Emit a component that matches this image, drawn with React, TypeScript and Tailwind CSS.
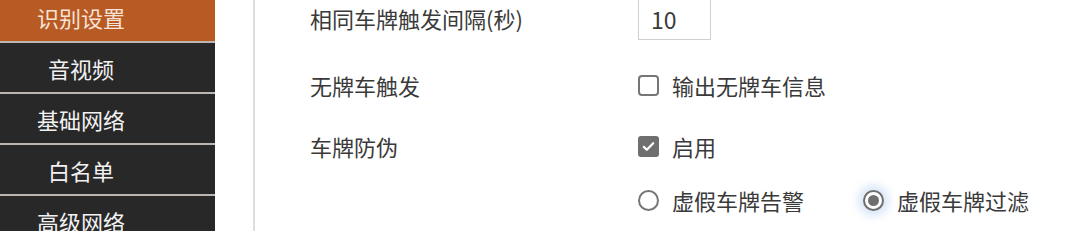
import type { ReactNode } from 'react';

const MENU = [
  { label: '识别设置', active: true },
  { label: '音视频', active: false },
  { label: '基础网络', active: false },
  { label: '白名单', active: false },
  { label: '高级网络', active: false },
];

function Checkbox({ checked }: { checked: boolean }) {
  if (checked) {
    return (
      <span className="flex h-[21px] w-[21px] items-center justify-center rounded-[3px] bg-[#6f6f6f]">
        <svg viewBox="0 0 16 16" className="h-[15px] w-[15px]" fill="none">
          <path d="M3 8.4l3.2 3.1L13 4.6" stroke="#fff" strokeWidth="2.4" strokeLinecap="round" strokeLinejoin="round" />
        </svg>
      </span>
    );
  }
  return <span className="block h-[21px] w-[21px] rounded-[4px] border-2 border-[#767676] bg-white" />;
}

function Radio({ checked }: { checked: boolean }) {
  if (checked) {
    return (
      <span className="flex h-[21px] w-[21px] items-center justify-center rounded-full border-2 border-[#6f6f6f] bg-white shadow-[0_0_8px_5px_rgba(170,200,240,0.45)]">
        <span className="block h-[11px] w-[11px] rounded-full bg-[#6f6f6f]" />
      </span>
    );
  }
  return <span className="block h-[21px] w-[21px] rounded-full border-2 border-[#767676] bg-white" />;
}

function Option({ control, children }: { control: ReactNode; children: ReactNode }) {
  return (
    <label className="flex items-center gap-[13px]">
      {control}
      <span>{children}</span>
    </label>
  );
}

export default function App() {
  return (
    <div
      className="flex h-[231px] w-[1080px] overflow-hidden bg-white text-[22px] leading-none"
      style={{ fontFamily: '"Noto Sans CJK SC", "Noto Sans", sans-serif' }}
    >
      <nav className="-mt-[8px] flex w-[215px] shrink-0 flex-col">
        {MENU.map((item) => (
          <div
            key={item.label}
            className={
              item.active
                ? 'flex h-[51px] shrink-0 items-center justify-center border-b-2 border-[#bdb6b0] bg-[#b85a24] pr-[53px] text-[#f7e3d6]'
                : 'flex h-[51px] shrink-0 items-center justify-center border-b-2 border-[#bdb6b0] bg-[#282828] pr-[53px] text-[#f2f2f2]'
            }
          >
            {item.label}
          </div>
        ))}
      </nav>

      <div className="ml-[38px] w-[2px] shrink-0 bg-[#dedede]" />

      <div className="flex flex-1 flex-col pl-[55px] text-[#3a3a3a]">
        <div className="-mt-[4px] flex h-[44px] items-center">
          <span className="w-[328px]">相同车牌触发间隔(秒)</span>
          <span className="flex h-[44px] w-[73px] items-center border border-[#cfcfcf] px-[12px] pt-[2px] text-[23px]">10</span>
        </div>

        <div className="mt-[25px] flex h-[40px] items-center">
          <span className="w-[328px]">无牌车触发</span>
          <Option control={<Checkbox checked={false} />}>输出无牌车信息</Option>
        </div>

        <div className="mt-[21px] flex h-[40px] items-center">
          <span className="w-[328px]">车牌防伪</span>
          <Option control={<Checkbox checked />}>启用</Option>
        </div>

        <div className="mt-[14px] flex h-[40px] items-center">
          <span className="w-[328px]" />
          <div className="flex items-center gap-[59px]">
            <Option control={<Radio checked={false} />}>虚假车牌告警</Option>
            <Option control={<Radio checked />}>虚假车牌过滤</Option>
          </div>
        </div>
      </div>
    </div>
  );
}
